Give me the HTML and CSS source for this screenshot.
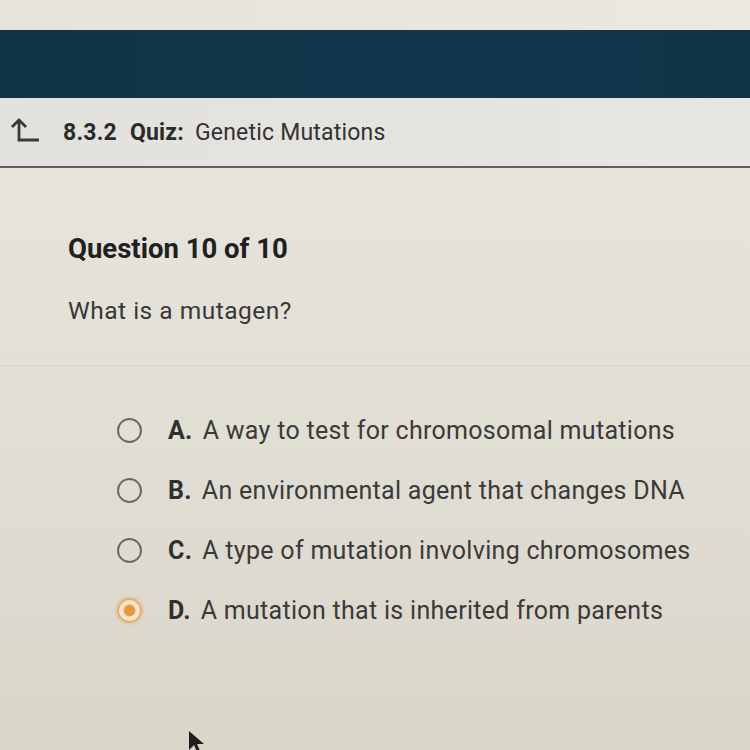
FILE: index.html
```html
<!DOCTYPE html>
<html>
<head>
<meta charset="utf-8">
<link rel="stylesheet" href="styles.css">
</head>
<body>
<div class="page">
  <div class="topband"></div>
  <div class="navbar"></div>
  <div class="header">
    <svg class="back" width="32" height="28" viewBox="0 0 32 28">
      <path d="M3 10 L10 3 L17 10 M10 3 L10 23 L30 23" fill="none" stroke="#3a3a3a" stroke-width="2.8" stroke-linejoin="miter"/>
    </svg>
    <span class="num">8.3.2</span>
    <span class="quiz">Quiz:</span>
    <span class="title">Genetic Mutations</span>
  </div>
  <div class="content">
    <div class="qhead">Question 10 of 10</div>
    <div class="qtext">What is a mutagen?</div>
    <div class="divider"></div>
    <div class="options">
      <div class="opt"><span class="radio"></span><span class="letter">A.</span><span class="otext">A way to test for chromosomal mutations</span></div>
      <div class="opt"><span class="radio"></span><span class="letter">B.</span><span class="otext">An environmental agent that changes DNA</span></div>
      <div class="opt"><span class="radio"></span><span class="letter">C.</span><span class="otext">A type of mutation involving chromosomes</span></div>
      <div class="opt"><span class="radio selected"></span><span class="letter">D.</span><span class="otext">A mutation that is inherited from parents</span></div>
    </div>
    <svg class="cursor" width="20" height="26" viewBox="0 0 20 26">
      <path d="M2 1 L2 20 L7 15 L11 24 L14 23 L10 14 L17 14 Z" fill="#1e1e1e"/>
    </svg>
  </div>
</div>
</body>
</html>
```

FILE: styles.css
```css
html, body {
  margin: 0;
  padding: 0;
}
body {
  width: 750px;
  height: 750px;
  overflow: hidden;
  font-family: Roboto, "Liberation Sans", sans-serif;
  background: #dedacf;
}
.page {
  width: 750px;
  height: 750px;
  display: flex;
  flex-direction: column;
}
.topband {
  height: 30px;
  background: linear-gradient(90deg, #e6e3dc, #ebe8e2);
}
.navbar {
  height: 68px;
  background: linear-gradient(90deg, #0f3346, #12374c 60%, #0f3347);
}
.header {
  height: 68px;
  background: linear-gradient(90deg, #e2e1dd, #e7e6e2);
  border-bottom: 2px solid #5f5f5d;
  display: flex;
  align-items: center;
  padding-left: 9px;
  color: #2e2e2e;
  font-size: 23px;
  letter-spacing: 0.2px;
}
.back {
  margin-right: 22px;
  margin-top: -2px;
}
.num {
  font-weight: 700;
  color: #2b2b2b;
  margin-right: 13px;
}
.quiz {
  font-weight: 700;
  color: #2b2b2b;
  margin-right: 11px;
}
.title {
  color: #333;
}
.content {
  flex: 1;
  position: relative;
  background: linear-gradient(180deg, #e7e4dc 0%, #e2dfd5 40%, #d9d5c9 100%);
  padding-left: 68px;
  padding-top: 66px;
}
.qhead {
  font-weight: 700;
  font-size: 27.5px;
  color: #202020;
  line-height: 30px;
}
.qtext {
  margin-top: 33px;
  font-size: 24.5px;
  letter-spacing: 0.5px;
  color: #383838;
  line-height: 28px;
}
.divider {
  margin-top: 40px;
  margin-left: -68px;
  height: 1px;
  background: #d8d5cc;
}
.options {
  margin-top: 49px;
  padding-left: 49px;
  display: flex;
  flex-direction: column;
  gap: 30px;
}
.opt {
  display: flex;
  align-items: center;
  height: 30px;
  font-size: 25px;
  letter-spacing: 0.3px;
  color: #3a3a3a;
}
.radio {
  width: 25px;
  height: 25px;
  border: 2.5px solid #6a6a68;
  border-radius: 50%;
  margin-right: 26px;
  flex-shrink: 0;
  box-sizing: border-box;
}
.radio.selected {
  border-color: #e8ad66;
  background: radial-gradient(circle, #e69a3c 0 5px, #efe6d6 6.5px);
  box-shadow: 0 0 0 2px rgba(230, 170, 100, 0.25);
}
.letter {
  font-weight: 700;
  color: #303030;
  margin-right: 10px;
}
.otext {
  color: #3a3a3a;
}
.cursor {
  position: absolute;
  left: 187px;
  top: 562px;
}
```
